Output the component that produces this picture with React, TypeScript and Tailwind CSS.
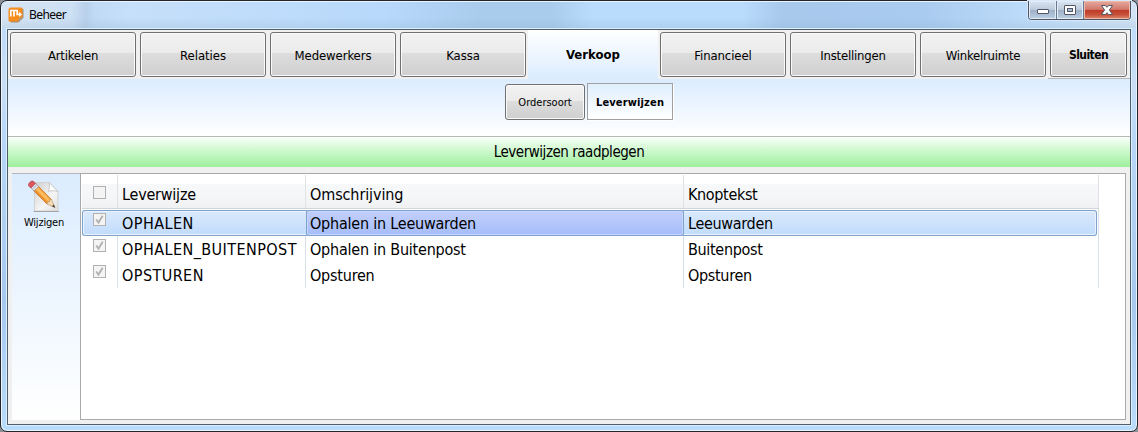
import clsx from "clsx";

const tabs = [
  { label: "Artikelen", tracking: "tracking-[-0.2px]" },
  { label: "Relaties", tracking: "tracking-[-0.05px]" },
  { label: "Medewerkers", tracking: "tracking-[-0.1px]" },
  { label: "Kassa", tracking: "tracking-[-0.1px]" },
  { label: "Verkoop", tracking: "tracking-[0px]", active: true },
  { label: "Financieel", tracking: "tracking-[-0.1px]" },
  { label: "Instellingen", tracking: "tracking-[-0.2px]" },
  { label: "Winkelruimte", tracking: "tracking-[-0.25px]" },
];

const rows = [
  { code: "OPHALEN", description: "Ophalen in Leeuwarden", button: "Leeuwarden" },
  { code: "OPHALEN_BUITENPOST", description: "Ophalen in Buitenpost", button: "Buitenpost" },
  { code: "OPSTUREN", description: "Opsturen", button: "Opsturen" },
];

const raised =
  "flex items-center justify-center rounded-[3px] border border-[#707070] bg-[linear-gradient(#f2f2f2_0%,#ebebeb_46%,#dddddd_47%,#cfcfcf_100%)] shadow-[inset_0_0_0_1px_#fafafa]";

function AppIcon() {
  return (
    <svg width="16" height="16" viewBox="0 0 16 16" className="shrink-0">
      <path d="M2 .5h11.500l1.500 1.500v8.500L10.500 15H2L.5 13.500V2z" fill="#f68d1f" />
      <path d="M15 2v8.500L10.500 15H3" fill="none" stroke="#9a8f7c" />
      <path d="M15 10.500L10.500 15v-2.500l2-2z" fill="#a39a8a" />
      <path
        d="M2.800 9.500V3.500h6.400v4h2.600M6 4v5.500"
        fill="none"
        stroke="#fff"
        strokeWidth="1.700"
      />
      <path d="M11 4.800l3 2.700-3 2.500z" fill="#fff" />
    </svg>
  );
}

function EditIcon() {
  return (
    <svg width="32" height="34" viewBox="0 0 32 34">
      <defs>
        <linearGradient id="paper" x1="0" y1="0" x2="1" y2="1">
          <stop offset="0" stopColor="#cfcfcf" />
          <stop offset="0.6" stopColor="#f6f6f6" />
          <stop offset="1" stopColor="#dcdcdc" />
        </linearGradient>
        <linearGradient id="wood" x1="0" y1="0" x2="0" y2="1">
          <stop offset="0" stopColor="#f0952c" />
          <stop offset="0.4" stopColor="#ffc66c" />
          <stop offset="1" stopColor="#e87a10" />
        </linearGradient>
      </defs>
      <path d="M6.500 2.500H21l9 9v19.500H6.500z" fill="url(#paper)" stroke="#d2d2d2" />
      <path d="M5.500 31.500h25.500" stroke="#a5a5a5" />
      <path d="M21 2.500c.8 3 .6 6-.6 8.800 3-.9 6-.8 9.600.2z" fill="#fff" stroke="#bdbdbd" strokeWidth=".8" />
      <g transform="translate(2.200 2.700) rotate(45)">
        <path d="M8 -3.200h19v6.400H8z" fill="url(#wood)" stroke="#bf6a17" strokeWidth=".6" />
        <path d="M27 -3.200L35 0l-8 3.200-1.200-1.600L27 0l-1.200-1.600z" fill="#f5dcb4" stroke="#a97c4a" strokeWidth=".5" />
        <path d="M32 -1.200L35.300 0 32 1.200z" fill="#3d3430" />
        <path d="M4 -3.300h4.500v6.600H4z" fill="#e3e4e8" stroke="#8e8e96" strokeWidth=".6" />
        <path d="M6.200 -3.300v6.600" stroke="#9a9aa2" strokeWidth=".6" />
        <path d="M4.200 -3.300H1.500q-2 0-2 3.300t2 3.300h2.700z" fill="#dc5960" stroke="#a5343b" strokeWidth=".6" />
      </g>
    </svg>
  );
}

function WindowButtons() {
  return (
    <div className="-mt-px mr-[5px] flex h-[19px] w-[103px] overflow-hidden rounded-b-[4px] border border-t-0 border-[#4b5566] shadow-[0_0_0_1px_#d8e8f8]">
      <div className="flex w-7 items-center justify-center border-r border-[#69788e] bg-[linear-gradient(#dbe5f1_0%,#bccadb_48%,#9dafc6_50%,#bed0e3_100%)] shadow-[inset_0_0_0_1px_#e3edf7]">
        <svg width="14" height="8" viewBox="0 0 14 8" className="mt-0.5">
          <rect x="1.500" y="2.500" width="11" height="4" rx=".5" fill="#fff" stroke="#535665" />
        </svg>
      </div>
      <div className="flex w-[27px] items-center justify-center border-r border-[#69788e] bg-[linear-gradient(#dbe5f1_0%,#bccadb_48%,#9dafc6_50%,#bed0e3_100%)] shadow-[inset_0_0_0_1px_#e3edf7]">
        <svg width="14" height="11" viewBox="0 0 14 11">
          <rect x="1.500" y=".5" width="11" height="9" rx=".5" fill="#fff" stroke="#535665" />
          <rect x="4.500" y="3.500" width="5" height="3" fill="#a9bbd1" stroke="#535665" />
        </svg>
      </div>
      <div className="flex flex-1 items-center justify-center bg-[linear-gradient(#e6aaa0_0%,#d2786b_47%,#bd3926_50%,#c65038_75%,#dc8b6e_100%)] shadow-[inset_0_0_0_1px_#efb9a9]">
        <svg width="14" height="12" viewBox="0 0 14 12">
          <path
            d="M1.500 1.500h4L7 3.300l1.500-1.800h4L9.400 6l3.100 4.500h-4L7 8.700l-1.500 1.800h-4L4.600 6z"
            fill="#fff"
            stroke="#535665"
          />
        </svg>
      </div>
    </div>
  );
}

function Checkbox({ checked = false }: { checked?: boolean }) {
  return (
    <div className="size-[13px] border border-[#b1b1b1] bg-[#f4f4f4]">
      {checked && (
        <svg width="11" height="11" viewBox="0 0 11 11">
          <path d="M2.200 5.500l2.300 3L8.700 1.800" fill="none" stroke="#b2b2b2" strokeWidth="1.900" />
        </svg>
      )}
    </div>
  );
}

function TabBar() {
  return (
    <div className="flex h-[49px] bg-[#f0f0f0]">
      {tabs.map((tab) =>
        tab.active ? (
          <div
            key={tab.label}
            className="flex w-[130px] items-center justify-center bg-[linear-gradient(#ffffff,#dbecfe)] text-[13px] font-bold"
          >
            <span className={tab.tracking}>{tab.label}</span>
          </div>
        ) : (
          <div key={tab.label} className="w-[130px] px-0.5 pt-0.5">
            <div className={clsx(raised, "h-[45px] pt-0.5 text-[13px]")}>
              <span className={tab.tracking}>{tab.label}</span>
            </div>
          </div>
        ),
      )}
      <div className="flex-1 border-b border-[#b8b8b8] pt-0.5 pr-[3px] pl-0.5">
        <div className={clsx(raised, "h-[45px] text-[12px] font-bold")}>
          <span className="tracking-[-0.55px]">Sluiten</span>
        </div>
      </div>
    </div>
  );
}

function SubTabs() {
  return (
    <div className="flex h-[57px] gap-0.5 bg-[linear-gradient(#dbecfe,#ffffff)] pt-1 pl-[497px]">
      <div className={clsx(raised, "mt-px h-9 w-20 pt-[3px] text-[11px]")}>
        <span>Ordersoort</span>
      </div>
      <div className="flex h-[37px] w-[86px] items-center justify-center border border-[#a0a0a0] bg-[linear-gradient(#e0effe,#ffffff)] pt-[3px] text-[11px] font-bold shadow-[1px_1px_0_#fff]">
        <span className="tracking-[0.15px]">Leverwijzen</span>
      </div>
    </div>
  );
}

function DataTable() {
  return (
    <div className="h-[247px] w-[1046px] border border-[#a7a9ad] bg-white pt-px pl-px text-[16px] tracking-[-0.22px]">
      <div className="flex h-[34px] w-[1017px] border-b border-[#d3d4d6] bg-[linear-gradient(#ffffff_0px,#ffffff_9px,#f7f8fa_9px,#f5f6f8_22px,#f0f1f3_33px)]">
        <div className="w-9 border-r border-[#e0e1e4] pt-[11px] pl-[11px]">
          <Checkbox />
        </div>
        <div className="w-[188px] border-r border-[#e0e1e4] pt-2 pl-1 leading-6">Leverwijze</div>
        <div className="w-[378px] border-r border-[#e0e1e4] pt-2 pl-1 leading-6 tracking-[-0.1px]">Omschrijving</div>
        <div className="flex-1 border-r border-[#e0e1e4] pt-2 pl-1 leading-6 tracking-[-0.35px]">Knoptekst</div>
      </div>
      <div className="w-[1017px] border-r border-[#d8e0ec] pt-px">
        {rows.map((row, i) => {
          const selected = i === 0;
          return (
            <div
              key={row.code}
              className={clsx(
                "flex h-[26px] w-[1015px] leading-6",
                selected &&
                  "rounded-[3px] bg-[linear-gradient(#dceafc,#c0dbfc)] shadow-[inset_0_0_0_1px_#7da2ce,inset_0_0_0_2px_#ebf4fe]",
              )}
            >
              <div className={clsx("w-9 pt-[3px] pl-[11px]", !selected && "border-r border-[#d8e0ec]")}>
                <Checkbox checked />
              </div>
              <div
                className={clsx("w-[188px] pt-0.5 pl-1 tracking-[0.44px]", !selected && "border-r border-[#d8e0ec]")}
              >
                {row.code}
              </div>
              <div
                className={clsx(
                  "w-[378px] pt-0.5 pl-1",
                  selected
                    ? "rounded-[3px] bg-[linear-gradient(#c4d0fb,#a4bcfb)] shadow-[inset_0_0_0_1px_#7da2ce,inset_0_0_0_2px_#c9d6fb]"
                    : "border-r border-[#d8e0ec]",
                )}
              >
                {row.description}
              </div>
              <div className="pt-0.5 pl-1 tracking-[-0.32px]">{row.button}</div>
            </div>
          );
        })}
      </div>
    </div>
  );
}

export default function App() {
  return (
    <div className="h-[432px] w-[1138px] overflow-hidden bg-[#8b8f96] font-['DejaVu_Sans_Condensed','DejaVu_Sans',sans-serif] whitespace-nowrap text-black">
      <div className="flex h-full flex-col rounded-[7px] border border-[#24252b] bg-[linear-gradient(#b9dafb_0%,#c9def5_20%,#b9d8f8_30%,#a6c8ee_70%,#b9dcfc_100%)] shadow-[inset_0_0_0_1px_#e8f4fe]">
        <div className="mx-px mt-px flex h-[26px] shrink-0 justify-between rounded-t-[5px] bg-[linear-gradient(transparent_60%,#7fa5c030),linear-gradient(90deg,#d6e4f3_0px,#cde0f4_70px,#b9d0ea_84px,#c0d9f4_92px,#c6dffa_130px,#b8d9fb_380px,#a9cbec_480px,#a9cbec_550px,#b9dbfc_590px,#b9dbfc_740px,#a8c9ec_780px,#a9cbef_920px,#bedcfa_1030px,#d2e3f5_1134px)]">
          <div className="flex items-center gap-[5px] pl-1.5">
            <AppIcon />
            <span className="font-['Noto_Sans',sans-serif] text-[12px] tracking-[-0.55px]">Beheer</span>
          </div>
          <WindowButtons />
        </div>
        <div className="mx-[5px] mb-[5px] flex-1 border border-[#dff0fd]">
          <div className="h-full border border-[#4e5d6b] bg-[#f0f0f0]">
            <TabBar />
            <SubTabs />
            <div className="flex h-[31px] items-center justify-center border-t border-[#b8b8b8] bg-[linear-gradient(#f8fff8,#9cf09c)] pt-px text-[15px]">
              <span className="tracking-[-0.47px]">Leverwijzen raadplegen</span>
            </div>
            <div className="flex pt-1.5 pl-1">
              <div className="flex h-[247px] w-[68px] flex-col items-center border-t border-[#b4b8bd] bg-[linear-gradient(#dbecfe,#ffffff)] pt-1.5 pr-1">
                <EditIcon />
                <span className="mt-px text-[11px] leading-4 tracking-[-0.2px]">Wijzigen</span>
              </div>
              <DataTable />
            </div>
          </div>
        </div>
      </div>
    </div>
  );
}
